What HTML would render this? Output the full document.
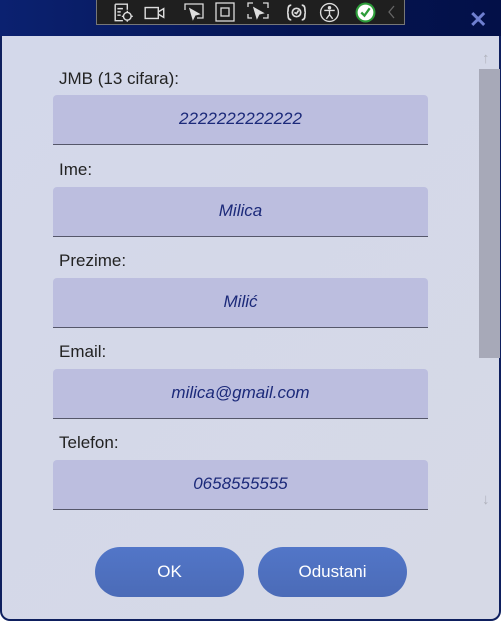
<!DOCTYPE html>
<html><head><meta charset="utf-8"><style>
*{margin:0;padding:0;box-sizing:border-box}
body{width:501px;height:621px;overflow:hidden;background:#fff;font-family:"Liberation Sans",sans-serif;position:relative}
.title{position:absolute;left:0;top:0;width:501px;height:37px;background:linear-gradient(90deg,#0b2170,#041452 60%,#031048)}
.win{position:absolute;left:0;top:36px;width:501px;height:585px;background:linear-gradient(135deg,#d3d8ea,#d6d9e6);border:2px solid #0e1f5e;border-top:none;border-radius:0 0 10px 10px}
.tb{position:absolute;left:96px;top:0;width:309px;height:25px;background:#1f1f1f;border:1px solid #777;border-top:none}
.tb svg{position:absolute;top:2px}
.x{position:absolute;left:469px;top:7px;color:#6f7fd0;font-size:22px;font-weight:bold}
.lbl{position:absolute;left:59px;font-size:17px;color:#222}
.box{position:absolute;left:53px;width:375px;height:50px;background:#bcbedf;border-radius:4px 4px 0 0;border-bottom:1px solid #55576a;text-align:center;line-height:48px;font-style:italic;font-size:17px;color:#1c2a7a}
.sb{position:absolute;left:479px;top:69px;width:21px;height:289px;background:#a7a9b8}
.ar{position:absolute;left:482px;color:#b0b2bc;font-size:15px}
.btn{position:absolute;top:547px;width:149px;height:50px;border-radius:25px;background:linear-gradient(#5276c8,#4b6bb7);color:#fff;font-size:17px;text-align:center;line-height:50px}
</style></head><body>
<div class="title"></div>
<div class="tb">
<svg style="left:16px" width="22" height="22" viewBox="0 0 20 20" fill="none" stroke="#ddd" stroke-width="1.3"><path d="M2 2h11v5M2 2v15h7M4 6h5M4 9h3M4 12h3"/><circle cx="13" cy="13" r="3.5"/><path d="M13 8v2M13 16v2M8 13h2M16 13h2"/></svg>
<svg style="left:46px" width="24" height="22" viewBox="0 0 22 20" fill="none" stroke="#ddd" stroke-width="1.3"><rect x="2" y="5" width="12" height="10"/><path d="M14 9l5-3v8l-5-3"/></svg>
<svg style="left:86px" width="22" height="22" viewBox="0 0 22 22" fill="none" stroke="#ddd" stroke-width="1.3"><path d="M2 8V2h18v14h-6"/><path d="M7 7l9 5-4 1-2 4z" fill="#ddd"/></svg>
<svg style="left:118px" width="20" height="20" viewBox="0 0 20 20" fill="none" stroke="#ddd" stroke-width="1.3"><rect x="1" y="1" width="18" height="18"/><rect x="6" y="6" width="8" height="8"/></svg>
<svg style="left:150px" width="22" height="22" viewBox="0 0 22 22" fill="none" stroke="#ddd" stroke-width="1.3"><path d="M1 5V1h5M16 1h5v5M21 12v4h-5M1 12v4h4"/><path d="M7 6l9 5-4 1-2 4z" fill="#ddd"/></svg>
<svg style="left:189px" width="21" height="21" viewBox="0 0 20 20" fill="none" stroke="#ddd" stroke-width="1.6"><path d="M5 3q-3 0-3 4 0 3-1 3 1 0 1 3 0 4 3 4M15 3q3 0 3 4 0 3 1 3-1 0-1 3 0 4-3 4"/><circle cx="10" cy="10" r="4"/><path d="M8 10l2 1 2-3"/></svg>
<svg style="left:222px" width="21" height="21" viewBox="0 0 20 20" fill="none" stroke="#ddd" stroke-width="1.3"><circle cx="10" cy="10" r="8.5"/><circle cx="10" cy="5.5" r="1" fill="#ddd"/><path d="M5 8h10M10 8v4l-3 4M10 12l3 4"/></svg>
<svg style="left:258px" width="21" height="21" viewBox="0 0 20 20"><circle cx="10" cy="10" r="9.5" fill="#2d9d3a"/><circle cx="10" cy="10" r="7.5" fill="#fff"/><path d="M6 10l3 3 5-7" stroke="#2d9d3a" stroke-width="2.2" fill="none"/></svg>
<svg style="left:290px" width="10" height="20" viewBox="0 0 10 20"><path d="M7 4l-5 6 5 6" stroke="#666" stroke-width="1.3" fill="none"/></svg>
</div>
<div class="x">✕</div>
<div class="win"></div>
<div class="ar" style="top:50px">↑</div>
<div class="sb"></div>
<div class="ar" style="top:491px">↓</div>
<div class="lbl" style="top:69px">JMB (13 cifara):</div>
<div class="box" style="top:95px">2222222222222</div>
<div class="lbl" style="top:160px">Ime:</div>
<div class="box" style="top:187px">Milica</div>
<div class="lbl" style="top:251px">Prezime:</div>
<div class="box" style="top:278px">Milić</div>
<div class="lbl" style="top:342px">Email:</div>
<div class="box" style="top:369px">milica@gmail.com</div>
<div class="lbl" style="top:433px">Telefon:</div>
<div class="box" style="top:460px">0658555555</div>
<div class="btn" style="left:95px">OK</div>
<div class="btn" style="left:258px">Odustani</div>
</body></html>
